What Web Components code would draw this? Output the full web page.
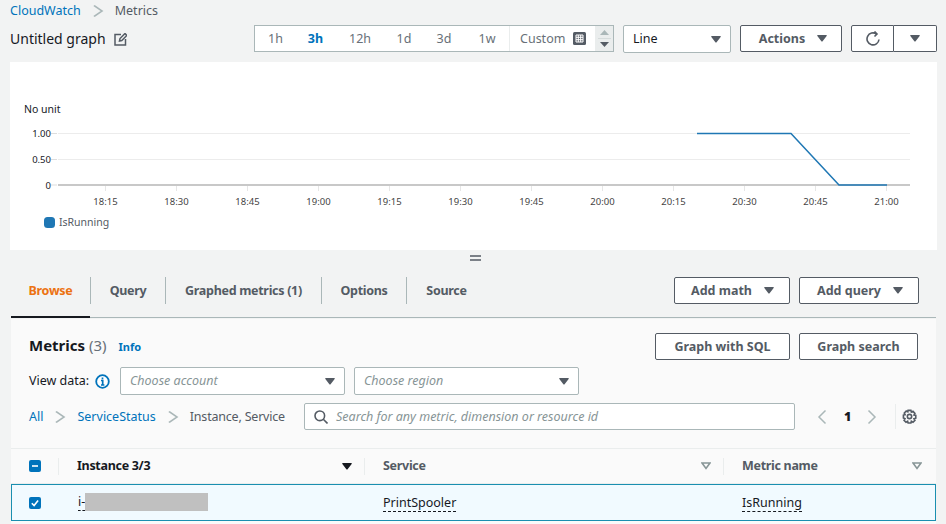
<!doctype html>
<html>
<head>
<meta charset="utf-8">
<title>CloudWatch Metrics</title>
<style>
  html, body { margin: 0; background: #f2f3f3; }
  body { width: 946px; height: 524px; overflow: hidden; font: 12.5px/18px "Noto Sans", sans-serif; color: #16191f; }
</style>
</head>
<body>
<metrics-page></metrics-page>

<script>
const caret = '<svg width="10" height="7" viewBox="0 0 10 7" fill="currentColor"><path d="M.8 0h8.400a.6.6 0 0 1 .45 1L5.400 6.400a.6.6 0 0 1-.85 0L.35 1A.6.6 0 0 1 .8 0z"/></svg>'
const chevron = '<svg class="chev" width="12" height="14" viewBox="0 0 12 20" fill="none" stroke="currentColor" stroke-width="2" preserveAspectRatio="none"><path d="M2 2l8 8-8 8"/></svg>'

customElements.define('aws-button', class extends HTMLElement {
  constructor () {
    super()
    this.attachShadow({ mode: 'open' })
    this.shadowRoot.innerHTML = `
<style>
  :host{
    display: inline-flex;
    align-items: center;
    justify-content: center;
    gap: 12px;
    box-sizing: border-box;
    height: 27px;
    border: 1px solid #545b64;
    border-radius: 2px;
    background: #fff;
    color: #545b64;
    font-weight: 700;
    white-space: nowrap;
  }
  ::slotted(svg){ display: block; }
</style>
<slot></slot>`
  }
})

customElements.define('aws-select', class extends HTMLElement {
  constructor () {
    super()
    this.attachShadow({ mode: 'open' })
    this.shadowRoot.innerHTML = `
<style>
  :host{
    display: flex;
    align-items: center;
    justify-content: space-between;
    box-sizing: border-box;
    height: 28px;
    padding: 0 9px 0 9px;
    border: 1px solid #aab7b8;
    border-radius: 2px;
    background: #fff;
    color: #16191f;
  }
  :host([placeholder]){ color: #879596; font-style: italic; }
  span{ color: #545b64; display: flex; font-style: normal; }
</style>
<slot></slot><span>${caret}</span>`
  }
})

customElements.define('time-range', class extends HTMLElement {
  constructor () {
    super()
    this.attachShadow({ mode: 'open' })
    const items = [['1h', 41], ['3h', 39], ['12h', 50], ['1d', 38], ['3d', 42], ['1w', 44]]
    this.shadowRoot.innerHTML = `
<style>
  :host{
    display: flex;
    box-sizing: border-box;
    width: 360px;
    height: 27px;
    border: 1px solid #aab7b8;
    background: #fff;
    color: #687078;
  }
  span{ text-align: center; line-height: 26px; }
  .on{ color: #0073bb; font-weight: 700; }
  .custom{
    display: flex;
    align-items: center;
    justify-content: space-between;
    width: 86px;
    box-sizing: border-box;
    padding: 0 9px 0 10px;
    border-left: 1px solid #eaeded;
  }
  .spin{
    flex: 1;
    display: flex;
    flex-direction: column;
    align-items: center;
    justify-content: center;
    gap: 3px;
    background: #eaeded;
  }
  .spin i{ width: 13px; border-top: 1px solid #d5dbdb; }
  svg{ display: block; }
</style>
${items.map(([t, w]) => `<span class="${t === '3h' ? 'on' : ''}" style="width:${w}px">${t}</span>`).join('')}
<div class="custom">Custom
  <svg width="13" height="13" viewBox="0 0 13 13"><rect width="13" height="13" rx="1.5" fill="#545b64"/><path d="M3 3h7v7H3zM3 5.300h7M3 7.700h7M5.300 3v7M7.700 3v7" fill="none" stroke="#fff"/></svg>
</div>
<div class="spin">
  <svg width="9" height="5" viewBox="0 0 9 5"><path d="M4.500 0l4.500 5H0z" fill="#aab7b8"/></svg>
  <i></i>
  <svg width="9" height="5" viewBox="0 0 9 5"><path d="M4.500 5L0 0h9z" fill="#545b64"/></svg>
</div>`
  }
})

customElements.define('metric-chart', class extends HTMLElement {
  constructor () {
    super()
    this.attachShadow({ mode: 'open' })
    const labels = ['18:15', '18:30', '18:45', '19:00', '19:15', '19:30', '19:45', '20:00', '20:15', '20:30', '20:45', '21:00']
    const ticks = labels.map((l, i) => {
      const x = 95.5 + i * 71
      return `<path d="M${x} 124v5" stroke="#e6e6e6"/><text x="${x}" y="143" text-anchor="middle" class="tick">${l}</text>`
    }).join('')
    this.shadowRoot.innerHTML = `
<style>
  :host{ display: block; height: 188px; margin: 0 9px 0 10px; background: #fff; }
  svg{ display: block; font: 9.5px "Noto Sans", sans-serif; fill: #16191f; }
  .tick{ fill: #444; }
</style>
<svg width="927" height="188" viewBox="0 0 927 188">
  <text x="14" y="51" font-size="10.5">No unit</text>
  <path d="M48 71.500h852M48 97.500h852" stroke="#ececec"/>
  <path d="M48 123h852" stroke="#c8c8c8" stroke-width="2"/>
  <path d="M41 71.500h6M41 97.500h6M41 123h6" stroke="#dddddd"/>
  <text x="41" y="74.500" text-anchor="end">1.00</text>
  <text x="41" y="100.500" text-anchor="end">0.50</text>
  <text x="41" y="126.500" text-anchor="end">0</text>
  ${ticks}
  <path d="M687 71.500h94L829 123h48" fill="none" stroke="#1f77b4" stroke-width="1.500"/>
  <rect x="34" y="155" width="11" height="11" rx="3.500" fill="#1f77b4"/>
  <text x="49" y="164" font-size="10.5" style="fill:#545b64">IsRunning</text>
</svg>`
  }
})

customElements.define('tab-bar', class extends HTMLElement {
  constructor () {
    super()
    this.attachShadow({ mode: 'open' })
    const tabs = [['Browse', 79], ['Query', 75], ['Graphed metrics (1)', 156], ['Options', 85], ['Source', 80]]
    this.shadowRoot.innerHTML = `
<style>
  :host{
    display: flex;
    align-items: flex-start;
    height: 54px;
    box-sizing: border-box;
    margin: 0 10px 0 11px;
    padding-top: 13px;
    border-bottom: 1px solid #aab7b8;
    position: relative;
    font-weight: 700;
    color: #545b64;
  }
  span{
    box-sizing: border-box;
    height: 27px;
    line-height: 27px;
    text-align: center;
    letter-spacing: -.3px;
    border-left: 1px solid #aab7b8;
  }
  span.first{ border-left: 0; color: #ec7211; }
  .mark{
    position: absolute;
    left: 0;
    bottom: -1px;
    width: 79px;
    height: 2px;
    background: #16191f;
  }
  .right{ margin-left: auto; margin-right: 17px; display: flex; gap: 9px; }
</style>
${tabs.map(([t, w], i) => `<span class="${i ? '' : 'first'}" style="width:${w}px">${t}</span>`).join('')}
<div class="right"><slot></slot></div>
<div class="mark"></div>`
  }
})

customElements.define('metrics-table', class extends HTMLElement {
  constructor () {
    super()
    this.attachShadow({ mode: 'open' })
    const sort = '<svg width="10" height="8" viewBox="0 0 10 8" fill="none" stroke="#879596" stroke-width="1.600"><path d="M1 1h8L5 6.500z"/></svg>'
    this.shadowRoot.innerHTML = `
<style>
  :host{ display: block; margin-top: 18px; }
  .row{ display: grid; grid-template-columns: 47px 306px 359px 1fr; box-sizing: border-box; }
  .head{
    height: 36px;
    border-top: 1px solid #eaeded;
    border-bottom: 1px solid #eaeded;
    font-weight: 700;
    color: #545b64;
    letter-spacing: -.3px;
    align-items: center;
  }
  .head > div{
    display: flex;
    align-items: center;
    justify-content: space-between;
    height: 17px;
    padding: 0 12px 0 18px;
    border-left: 1px solid #eaeded;
  }
  .head > div:last-child{ padding-right: 14px; }
  .head > .box, .body > .box{ border: 0; padding: 0 0 0 18px; display: flex; align-items: center; }
  .head .sorted{ color: #16191f; }
  .body{
    height: 37px;
    border: 1px solid #1a8fb0;
    background: #f1faff;
    align-items: center;
  }
  .body > div{ padding-left: 19px; }
  .body > .box{ padding-left: 17px; }
  .body > div:nth-child(n+3){ padding-left: 18px; }
  u{ text-decoration: none; border-bottom: 1px dashed #16191f; line-height: 16px; display: inline-block; }
  .id{ display: flex; align-items: center; }
  .mask{ display: inline-block; width: 123px; height: 18px; background: #c0c0c0; margin-bottom: 2px; }
  svg{ display: block; }
</style>
<div class="row head">
  <div class="box"><svg width="12" height="12" viewBox="0 0 12 12"><rect width="12" height="12" rx="2" fill="#0073bb"/><path d="M3 6h6" stroke="#fff" stroke-width="1.600"/></svg></div>
  <div class="sorted">Instance 3/3 <span style="color:#16191f">${caret}</span></div>
  <div>Service ${sort}</div>
  <div>Metric name ${sort}</div>
</div>
<div class="row body">
  <div class="box"><svg width="12" height="12" viewBox="0 0 12 12"><rect width="12" height="12" rx="2" fill="#0073bb"/><path d="M2.800 6.200l2.300 2.300 4-5" fill="none" stroke="#fff" stroke-width="1.600"/></svg></div>
  <div class="id"><u>i-</u><span class="mask"></span></div>
  <div><u>PrintSpooler</u></div>
  <div><u>IsRunning</u></div>
</div>`
  }
})

customElements.define('metrics-page', class extends HTMLElement {
  constructor () {
    super()
    this.attachShadow({ mode: 'open' })
    this.shadowRoot.innerHTML = `
<style>
  :host{ display: block; }
  svg{ display: block; }
  a{ color: #0073bb; text-decoration: none; }
  .chev{ color: #aab7b8; margin: 0 11px; flex: none; }
  .crumbs{ display: flex; align-items: center; height: 21px; padding-left: 10px; color: #545b64; }
  .title{ display: flex; align-items: center; height: 28px; margin-top: 4px; padding: 0 9px 0 10px; gap: 8px; }
  .title b{ font-weight: 400; font-size: 14px; }
  .title .tools{ margin-left: auto; display: flex; gap: 9px; }
  .split{ display: flex; }
  .grip{ height: 14px; padding: 5px 0 0 4px; box-sizing: border-box; display: flex; justify-content: center; }
  .panel{ margin: 1px 10px 0 11px; height: 206px; background: #fafafa; }
  .top{ display: flex; align-items: center; height: 27px; padding: 14px 18px 0 18px; }
  .top h2{ margin: 0 0 4px; font-size: 15px; font-weight: 700; }
  .top h2 span{ font-weight: 400; color: #687078; }
  .top a{ margin-left: 12px; font-size: 11px; font-weight: 700; }
  .top .btns{ margin-left: auto; display: flex; gap: 9px; }
  .view{ display: flex; align-items: center; margin-top: 7px; padding-left: 18px; }
  .view label{ width: 66px; }
  .view .i{ margin-right: 10px; }
  .view aws-select{ width: 225px; margin-right: 9px; }
  .path{ display: flex; align-items: center; height: 27px; margin-top: 8px; padding-left: 18px; color: #545b64; }
  .where{ display: flex; align-items: center; width: 275px; }
  .where span{ letter-spacing: -.2px; }
  .search{
    display: flex; align-items: center; gap: 8px;
    box-sizing: border-box; width: 491px; height: 27px; padding-left: 9px;
    border: 1px solid #aab7b8; border-radius: 2px; background: #fff;
    color: #879596; font-style: italic;
  }
  .pager{ display: flex; align-items: center; margin-left: 22px; color: #16191f; font-weight: 700; }
  .pager svg{ color: #aab7b8; }
  .pager b{ margin: 0 16px 0 17px; }
  .gear{ margin-left: 18px; padding-left: 6px; border-left: 1px solid #eaeded; height: 25px; display: flex; align-items: center; }
</style>
<div class="crumbs"><a>CloudWatch</a>${chevron}<span>Metrics</span></div>
<div class="title">
  <b>Untitled graph</b>
  <svg width="13" height="13" viewBox="0 0 13 13" fill="none" stroke="#545b64" stroke-width="1.500"><path d="M7 1.500H1v10.500h10.500V6M5.500 8l.5-2.500 5-5L12.800 2.500l-5 5z"/></svg>
  <div class="tools">
    <time-range></time-range>
    <aws-select style="width:108px">Line</aws-select>
    <aws-button style="width:102px;padding-left:4px">Actions ${caret}</aws-button>
    <div class="split">
      <aws-button style="width:43px;border-radius:2px 0 0 2px"><svg width="16" height="16" viewBox="0 0 16 16" fill="none" stroke="#545b64" stroke-width="1.600"><path d="M14 8.500A6 6 0 1 1 11.500 3M9.500.500l2.500 2.500-2.500 2.500"/></svg></aws-button>
      <aws-button style="width:43px;border-left:0;border-radius:0 2px 2px 0">${caret}</aws-button>
    </div>
  </div>
</div>
<div style="height:9px"></div>
<metric-chart></metric-chart>
<div class="grip"><svg width="11" height="6" viewBox="0 0 11 6" fill="none" stroke="#545b64" stroke-width="1.500"><path d="M0 1h11M0 5h11"/></svg></div>
<tab-bar>
  <aws-button style="width:116px;padding-left:1px">Add math ${caret}</aws-button>
  <aws-button style="width:120px;padding-left:2px">Add query ${caret}</aws-button>
</tab-bar>
<div class="panel">
  <div class="top">
    <h2>Metrics <span>(3)</span></h2><a>Info</a>
    <div class="btns">
      <aws-button style="width:135px">Graph with SQL</aws-button>
      <aws-button style="width:119px">Graph search</aws-button>
    </div>
  </div>
  <div class="view">
    <label>View data:</label>
    <svg class="i" width="15" height="15" viewBox="0 0 15 15"><circle cx="7.500" cy="7.500" r="6.300" fill="#fff" stroke="#0073bb" stroke-width="1.800"/><path d="M6 6.500h1.700V11M6 11h3.400M7.500 3.500v1.800" fill="none" stroke="#0073bb" stroke-width="1.700"/></svg>
    <aws-select placeholder>Choose account</aws-select>
    <aws-select placeholder>Choose region</aws-select>
  </div>
  <div class="path">
    <div class="where"><a>All</a>${chevron}<a>ServiceStatus</a>${chevron}<span>Instance, Service</span></div>
    <div class="search">
      <svg width="14" height="14" viewBox="0 0 14 14" fill="none" stroke="#545b64" stroke-width="1.600"><circle cx="5.800" cy="5.800" r="4.800"/><path d="M9.300 9.300L13.500 13.500"/></svg>
      Search for any metric, dimension or resource id
    </div>
    <div class="pager">
      <svg width="10" height="16" viewBox="0 0 10 16" fill="none" stroke="currentColor" stroke-width="1.500"><path d="M8.500 1.500L2 8l6.500 6.500"/></svg>
      <b>1</b>
      <svg width="10" height="16" viewBox="0 0 10 16" fill="none" stroke="currentColor" stroke-width="1.500"><path d="M1.500 1.500L8 8l-6.500 6.500"/></svg>
    </div>
    <div class="gear"><svg width="15" height="15" viewBox="0 0 16 16" fill="none" stroke="#545b64" stroke-width="1.700"><circle cx="8" cy="8" r="2.300"/><path d="M6.500 1.500h3l.5 1.900 1.700-.9 2.100 2.100-1 1.700 1.900.5v3l-1.900.5 1 1.700-2.100 2.100-1.700-1-.5 1.900h-3l-.5-1.900-1.700 1-2.100-2.100 1-1.700L1.500 9.500v-3l1.900-.5-1-1.700L4.500 2.200l1.700.9z"/></svg></div>
  </div>
  <metrics-table></metrics-table>
</div>`
  }
})
</script>
</body>
</html>
